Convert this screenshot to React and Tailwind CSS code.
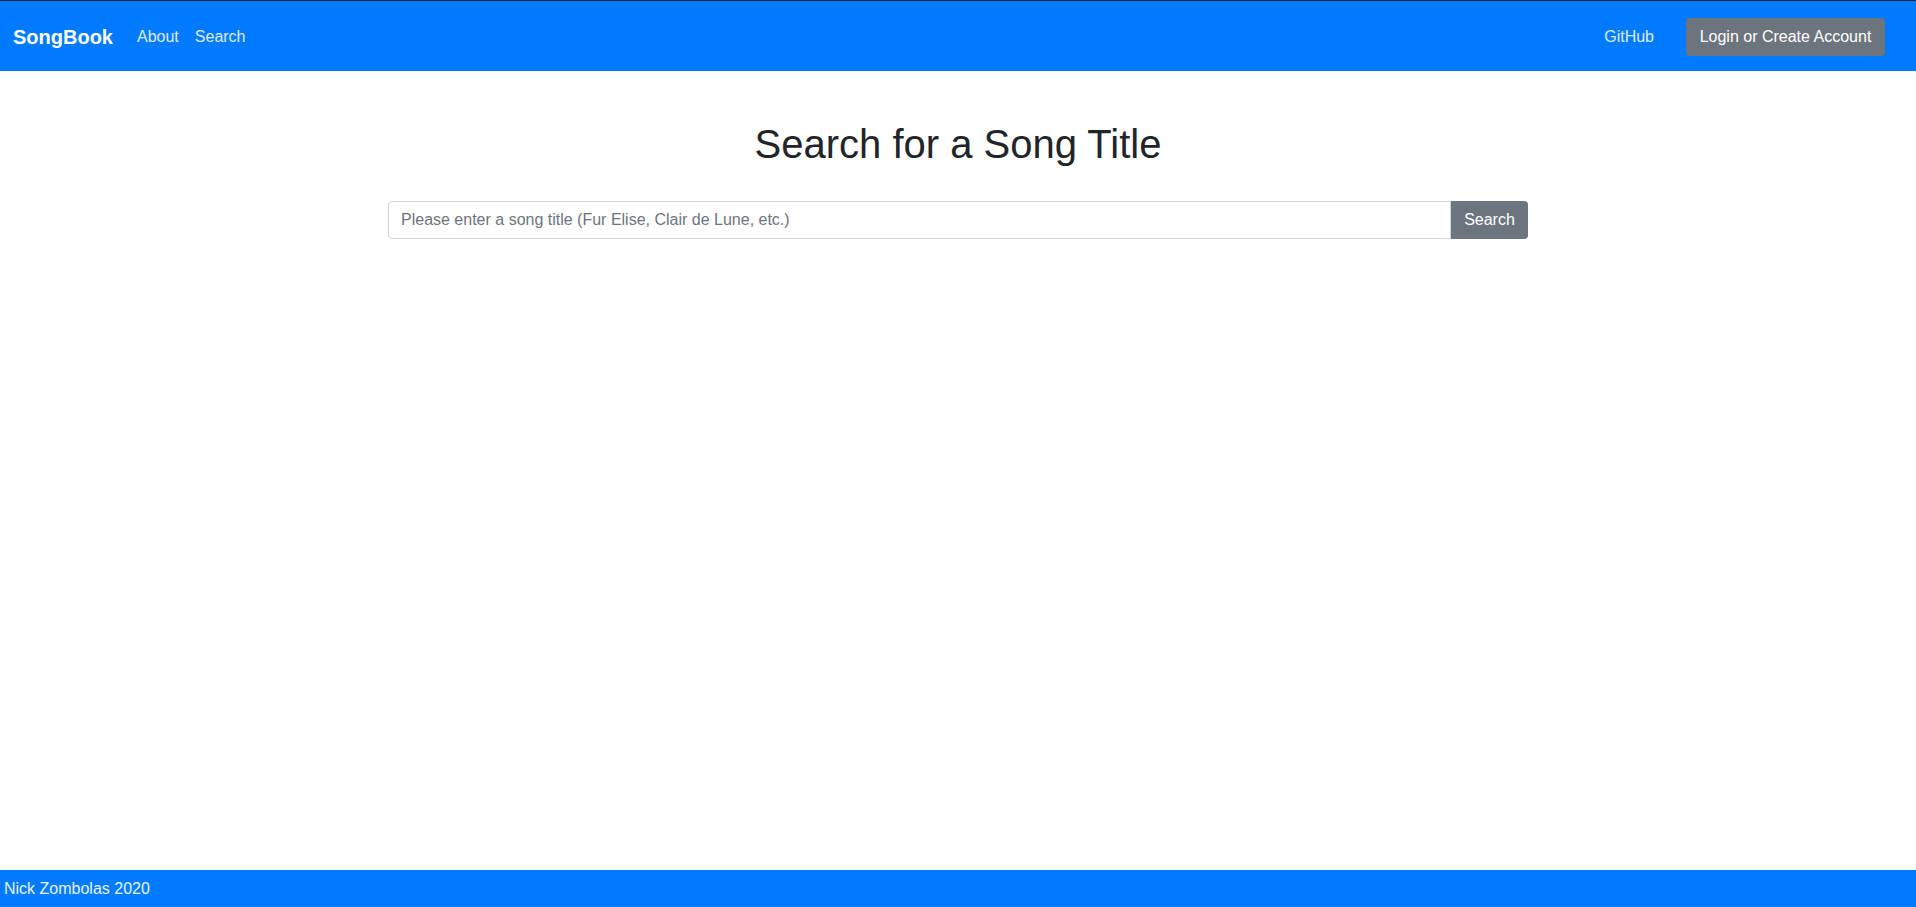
export default function App() {
  return (
    <div className="min-h-screen flex flex-col bg-white font-['Liberation_Sans',Arial,sans-serif] text-[#212529]">
      <nav className="h-[71px] border-t border-[#212529] bg-[#007bff] flex items-center pl-[13px] pr-[31px] pt-[2px]">
        <a href="#" className="text-white font-bold text-[20px] mr-4">
          SongBook
        </a>
        <a href="#" className="text-white/85 text-base px-2">About</a>
        <a href="#" className="text-white/85 text-base px-2">Search</a>
        <div className="ml-auto flex items-center">
          <a href="#" className="text-white/85 text-base px-2 mr-6">GitHub</a>
          <button className="bg-[#6c757d] text-white text-base rounded w-[199px] h-[38px]">
            Login or Create Account
          </button>
        </div>
      </nav>

      <main className="flex-1">
        <h1 className="text-center text-[40px] leading-[1.2] mt-[49px]">Search for a Song Title</h1>
        <form className="flex w-[1140px] mx-auto mt-[33px]">
          <input
            type="text"
            placeholder="Please enter a song title (Fur Elise, Clair de Lune, etc.)"
            className="flex-1 h-[38px] border border-[#ced4da] rounded-l px-3 text-base placeholder:text-[#6c757d] focus:outline-none"
          />
          <button type="submit" className="bg-[#6c757d] text-white text-base rounded-r h-[38px] w-[77px]">
            Search
          </button>
        </form>
      </main>

      <footer className="h-[37px] bg-[#007bff] text-white/90 flex items-center px-1 text-base">
        Nick Zombolas 2020
      </footer>
    </div>
  );
}
